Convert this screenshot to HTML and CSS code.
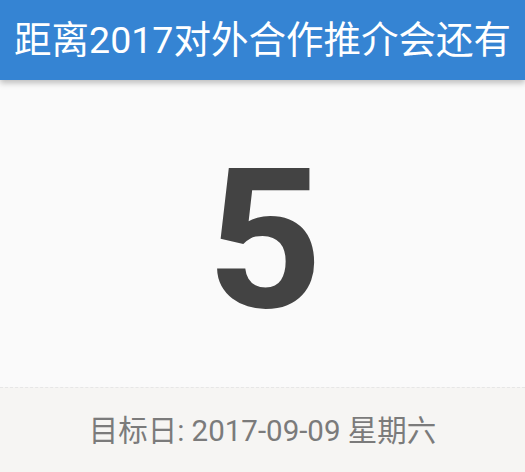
FILE: index.html
```html
<!DOCTYPE html>
<html>
<head>
<meta charset="utf-8">
<link rel="stylesheet" href="styles.css">
</head>
<body>
<div class="page">
  <header class="bar">距离2017对外合作推介会还有</header>
  <main class="main"><div class="num">5</div></main>
  <footer class="foot">目标日: 2017-09-09 星期六</footer>
</div>
</body>
</html>
```
FILE: styles.css
```css
html, body { margin: 0; padding: 0; }
body { width: 525px; height: 472px; overflow: hidden; background: #fafafa;
  font-family: Roboto, "Noto Sans CJK SC", sans-serif; }
.page { display: flex; flex-direction: column; height: 472px; }
.bar { height: 80px; background: #3584d3; color: #fff; font-size: 37.5px;
  display: flex; align-items: center; justify-content: center; line-height: 1;
  box-shadow: 0 3px 6px rgba(0,0,0,0.25); position: relative; z-index: 1; padding-top: 2px; box-sizing: border-box; }
.main { flex: 1; display: flex; align-items: center; justify-content: center; background: #fafafa; }
.num { font-size: 194px; font-weight: 700; color: #434343; line-height: 1; margin-top: 14px; margin-left: 5px; transform: scaleX(1.04); }
.foot { height: 85px; background: #f6f5f3; border-top: 1px dashed #e6e6e6; color: #7b7b7b;
  font-size: 29.5px; display: flex; align-items: center; justify-content: center; box-sizing: border-box; padding-bottom: 4px; }
```
